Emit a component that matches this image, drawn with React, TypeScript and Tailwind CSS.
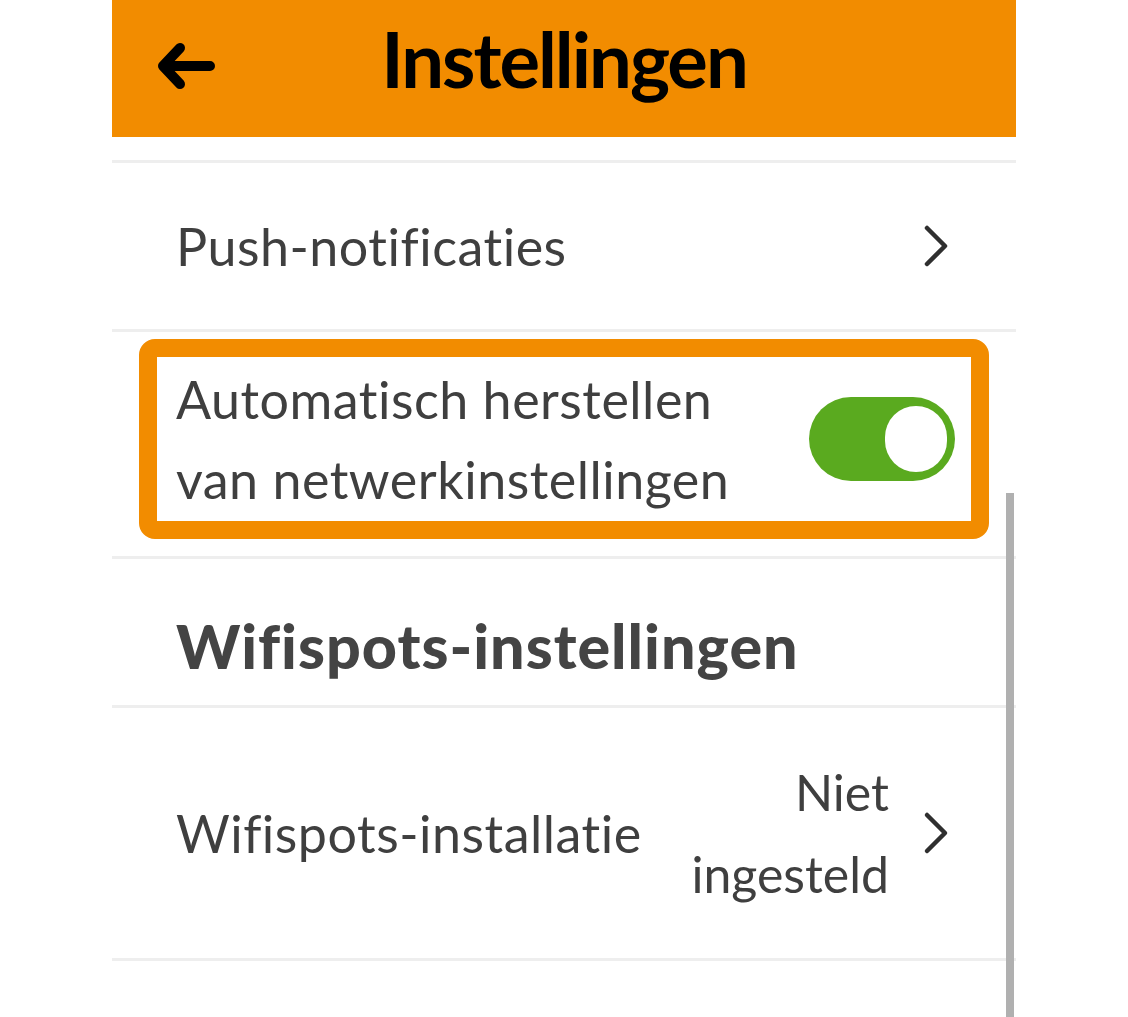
import React from "react";

function Chevron() {
  return (
    <svg width="28" height="44" viewBox="0 0 28 44" fill="none" className="shrink-0">
      <path d="M5 4 L23 22 L5 40" stroke="#2f2f2f" strokeWidth="4.5" strokeLinecap="round" strokeLinejoin="round" />
    </svg>
  );
}

function Divider() {
  return <div className="h-[3px] w-full bg-[#eeeeee]" />;
}

export default function App() {
  return (
    <div className="flex h-[1017px] w-full justify-center overflow-hidden bg-white" style={{ fontFamily: "Lato, 'Open Sans', sans-serif" }}>
      <div className="relative flex w-[904px] flex-col">
        {/* header */}
        <div className="relative flex h-[137px] shrink-0 items-center justify-center bg-[#f28c00]">
          <svg width="64" height="52" viewBox="0 0 64 52" fill="none" className="absolute left-[42px] top-[40px]">
            <path d="M56 26 H10 M26 8 L9 26 L26 44" stroke="#000" strokeWidth="10" strokeLinecap="round" strokeLinejoin="round" />
          </svg>
          <h1 className="mt-[-20px] text-[76px] font-bold tracking-[-2px] text-black">Instellingen</h1>
        </div>

        <div className="h-[23px] shrink-0" />
        <Divider />

        {/* push notifications */}
        <div className="flex h-[166px] shrink-0 items-center justify-between pl-[64px] pr-[66px]">
          <span className="text-[52px] tracking-[0.5px] text-[#3f3f3f]">Push-notificaties</span>
          <Chevron />
        </div>
        <Divider />

        {/* highlighted toggle row */}
        <div className="mx-[27px] mt-[7px] flex h-[200px] shrink-0 items-center justify-between rounded-[16px] border-[18px] border-[#f28c00] pl-[19px] pr-[16px]">
          <span className="text-[52px] leading-[80px] tracking-[0.5px] text-[#3f3f3f]">
            Automatisch herstellen
            <br />
            van netwerkinstellingen
          </span>
          <div className="flex h-[84px] w-[146px] items-center justify-end rounded-full bg-[#5aaa1f] pr-[8px]">
            <div className="h-[66px] w-[62px] rounded-full bg-white" />
          </div>
        </div>
        <div className="h-[17px] shrink-0" />
        <Divider />

        {/* section heading */}
        <div className="flex h-[146px] shrink-0 items-center pl-[64px] pt-[28px]">
          <h2 className="text-[61px] font-black tracking-[1px] text-[#444444]">Wifispots-instellingen</h2>
        </div>
        <Divider />

        {/* wifispots install */}
        <div className="flex h-[250px] shrink-0 items-center justify-between pl-[64px] pr-[66px]">
          <span className="text-[52px] tracking-[0.5px] text-[#3f3f3f]">Wifispots-installatie</span>
          <div className="flex items-center gap-[33px]">
            <span className="text-right text-[50px] leading-[82px] text-[#3f3f3f]">
              Niet
              <br />
              ingesteld
            </span>
            <Chevron />
          </div>
        </div>
        <Divider />

        {/* scrollbar */}
        <div className="absolute right-[2px] top-[493px] h-[524px] w-[8px] bg-[#b0b0b0]" />
      </div>
    </div>
  );
}
